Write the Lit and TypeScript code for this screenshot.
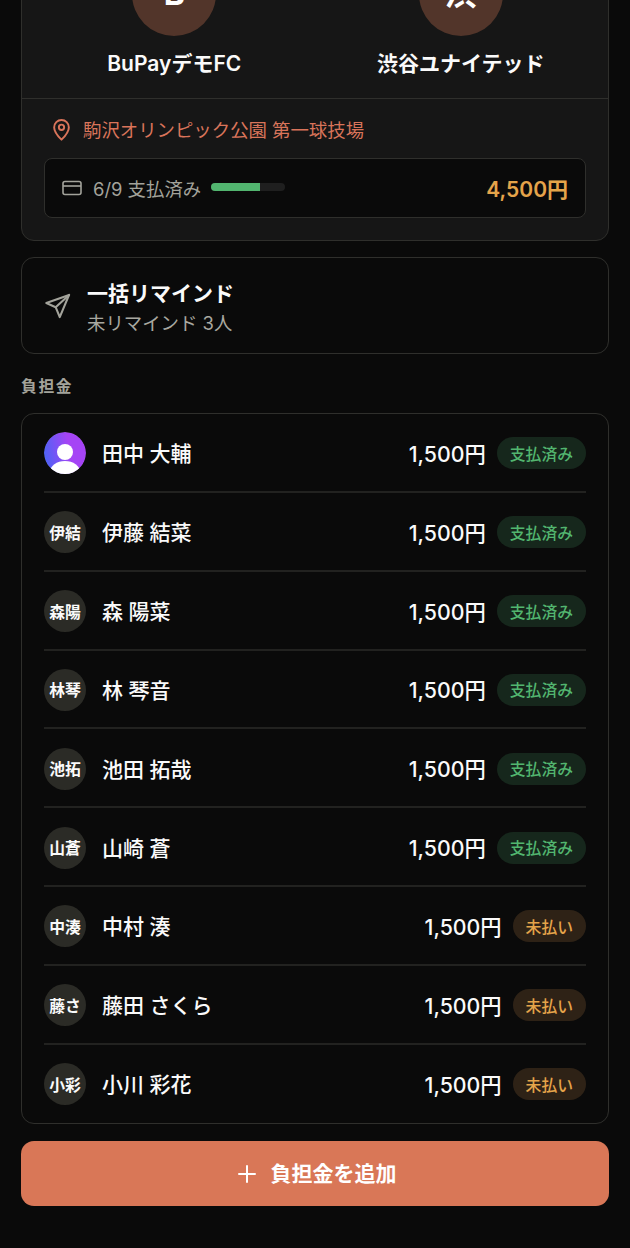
import { LitElement, html, css, svg } from "lit";
import { customElement } from "lit/decorators.js";

const rows = [
  { a: "", n: "田中 大輔", paid: true },
  { a: "伊結", n: "伊藤 結菜", paid: true },
  { a: "森陽", n: "森 陽菜", paid: true },
  { a: "林琴", n: "林 琴音", paid: true },
  { a: "池拓", n: "池田 拓哉", paid: true },
  { a: "山蒼", n: "山崎 蒼", paid: true },
  { a: "中湊", n: "中村 湊", paid: false },
  { a: "藤さ", n: "藤田 さくら", paid: false },
  { a: "小彩", n: "小川 彩花", paid: false },
];

@customElement("app-root")
export class AppRoot extends LitElement {
  static styles = css`
    :host { display: block; width: 630px; height: 1248px; overflow: hidden; background: #0a0a0a; color: #fafafa;
      font-family: Inter, "Noto Sans CJK JP", sans-serif; }
    * { box-sizing: border-box; }
    .page { display: flex; flex-direction: column; padding: 0 21px; }
    .match { margin-top: -70px; background: #161616; border: 1px solid #2f2f2c; border-radius: 13px; height: 311px; display: flex; flex-direction: column; }
    .teams { display: grid; grid-template-columns: 1fr 1fr; height: 168px; padding: 21px 4px 0 9px; border-bottom: 1px solid #2f2f2c; }
    .team { display: flex; flex-direction: column; align-items: center; gap: 13px; }
    .crest { width: 84px; height: 84px; border-radius: 50%; background: #52352a; display: flex; align-items: center; justify-content: center; font-size: 32px; font-weight: 700; color: #fff; line-height: 1; }
    .tname { font-size: 21px; font-weight: 600; line-height: 30px; color: #fafafa; }
    .loc { display: flex; align-items: center; gap: 12px; height: 59px; padding-left: 30px; padding-top: 1px; color: #d9745a; font-size: 18.4px; }
    .loc svg { display: block; }
    .pay { margin: 0 22px; height: 60px; background: #0a0a0a; border: 1px solid #2f2f2c; border-radius: 8px; display: flex; align-items: center; padding: 0 17px; color: #a3a39b; font-size: 18.4px; }
    .pay svg { margin-right: 11px; }
    .bar { width: 74px; height: 8px; margin-left: 10px; background: #1f1f1f; border-radius: 4px; overflow: hidden; margin-top: -2px; }
    .bar i { display: block; height: 100%; background: #52b56f; }
    .total { margin-left: auto; color: #e5a44a; font-size: 21px; font-weight: 600; }
    .remind { margin-top: 16px; height: 97px; border: 1px solid #2f2f2c; border-radius: 13px; display: flex; align-items: center; padding: 0 22px; gap: 15px; }
    .remind .txt { padding-top: 4px; }
    .remind .t { font-size: 21px; font-weight: 600; line-height: 30px; }
    .remind .s { font-size: 18.4px; color: #a8a8a0; line-height: 28px; }
    .label { margin-top: 23px; height: 36px; font-size: 15.8px; font-weight: 600; line-height: 20px; color: #a3a39b; letter-spacing: 1.6px; }
    .list { height: 711px; border: 1px solid #2f2f2c; border-radius: 13px; padding: 0 22px; }
    .row { height: 78.85px; display: flex; align-items: center; border-bottom: 2px solid #222220; }
    .row:last-child { border-bottom-color: transparent; }
    .av { width: 42px; height: 42px; margin-top: 2px; border-radius: 50%; background: #2b2b26; display: flex; align-items: center; justify-content: center; font-size: 15.8px; font-weight: 600; flex: none; overflow: hidden; }
    .name { margin-left: 16px; font-size: 21px; font-weight: 500; flex: 1; }
    .amt { font-size: 21.3px; font-weight: 500; margin-right: 11px; }
    .pill { height: 32px; margin-top: 2px; border-radius: 16px; padding: 0 13px; display: flex; align-items: center; font-size: 15.8px; font-weight: 500; }
    .pill.ok { background: #16271c; color: #52b56f; }
    .pill.no { background: #2e2216; color: #e5a44a; }
    .add { margin-top: 17px; height: 65px; padding-left: 3px; background: #d97757; border-radius: 13px; display: flex; align-items: center; justify-content: center; gap: 14px; font-size: 21px; font-weight: 600; color: #fff; }
    .add span { padding-bottom: 3px; }
  `;

  render() {
    return html`<div class="page">
      <section class="match">
        <div class="teams">
          <div class="team"><div class="crest">B</div><div class="tname">BuPayデモFC</div></div>
          <div class="team"><div class="crest">渋</div><div class="tname">渋谷ユナイテッド</div></div>
        </div>
        <div class="loc">
          <svg width="19" height="23" viewBox="0 0 21 26" fill="none" stroke="#d9745a" stroke-width="2.2"><path d="M10.5 24.5C6 20 2.2 15.4 2.2 10.6a8.3 8.3 0 0 1 16.6 0c0 4.8-3.8 9.4-8.3 13.9z" stroke-linejoin="round"/><circle cx="10.5" cy="10.5" r="3"/></svg>
          <span>駒沢オリンピック公園 第一球技場</span>
        </div>
        <div class="pay">
          <svg width="20" height="16" viewBox="0 0 20 16" fill="none" stroke="#a3a39b" stroke-width="1.6"><rect x="1" y="1.5" width="18" height="13" rx="2"/><path d="M1 6h18"/></svg>
          <span>6/9 支払済み</span>
          <div class="bar"><i style="width:66.6%"></i></div>
          <span class="total">4,500円</span>
        </div>
      </section>
      <section class="remind">
        <svg width="28" height="28" viewBox="0 0 24 24" fill="none" stroke="#a3a39b" stroke-width="1.8" stroke-linecap="round" stroke-linejoin="round"><path d="M21.5 2.5 2 9.5l8 3.5 3.5 8.5z"/><path d="M21.5 2.5 10 13"/></svg>
        <div class="txt"><div class="t">一括リマインド</div><div class="s">未リマインド 3人</div></div>
      </section>
      <div class="label">負担金</div>
      <section class="list">
        ${rows.map((r) => html`<div class="row">
          <div class="av">${r.a || this.photo()}</div>
          <div class="name">${r.n}</div>
          <div class="amt">1,500円</div>
          <div class="pill ${r.paid ? "ok" : "no"}">${r.paid ? "支払済み" : "未払い"}</div>
        </div>`)}
      </section>
      <div class="add">
        <svg width="20" height="20" viewBox="0 0 20 20" stroke="#fff" stroke-width="2" stroke-linecap="round"><path d="M10 2v16M2 10h16"/></svg>
        <span>負担金を追加</span>
      </div>
    </div>`;
  }

  photo() {
    return svg`<svg width="42" height="42" viewBox="0 0 42 42"><defs><linearGradient id="g" x1="0" y1="0.5" x2="1" y2="0.3"><stop offset="0" stop-color="#4f62f5"/><stop offset="0.6" stop-color="#a544f5"/></linearGradient></defs><circle cx="21" cy="21" r="21" fill="url(#g)"/><circle cx="21" cy="20" r="8" fill="#fff"/><ellipse cx="21" cy="40" rx="15" ry="11" fill="#fff"/></svg>`;
  }
}
